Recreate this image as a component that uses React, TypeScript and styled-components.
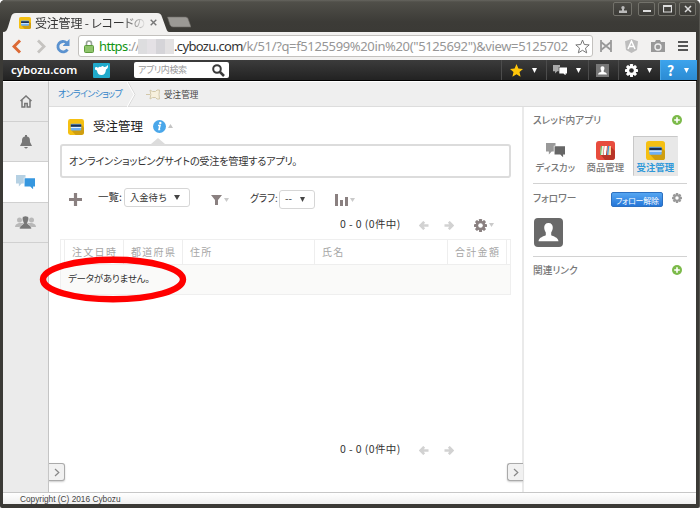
import React from "react";
import styled, { createGlobalStyle } from "styled-components";

const Global = createGlobalStyle`
  * { box-sizing: border-box; }
  body { margin: 0; background: #fff; overflow: hidden; }
  svg { display: block; flex: none; }
`;
const ui = `"Noto Sans", "Noto Sans CJK JP", sans-serif`;
const jp = `"Noto Sans CJK JP", "Noto Sans", sans-serif`;

const Window = styled.div`
  width: 700px; height: 508px; display: flex; flex-direction: column;
  padding: 0 3px 4px 3px; background: #3b3a36; border-radius: 5px 5px 2px 2px;
  border-right: 1px solid #55544f; overflow: hidden; font-family: ${jp};
`;
const Label = styled.span<{ $w: number; $size: number; $color?: string; $ls?: number; $bold?: boolean; $medium?: boolean; $ml?: number; $palt?: boolean; $up?: number }>`
  display: block; flex: none; white-space: nowrap; line-height: 16px;
  width: ${p => p.$w}px; margin-left: ${p => p.$ml ?? 0}px; margin-bottom: ${p => p.$up ?? 0}px;
  font-size: ${p => p.$size}px; color: ${p => p.$color ?? "#333"};
  letter-spacing: ${p => p.$ls ?? 0}px; font-weight: ${p => (p.$bold ? 700 : p.$medium ? 500 : 400)};
  font-feature-settings: ${p => (p.$palt ? '"palt"' : "normal")};
`;

/* Browser chrome */
const TitleBar = styled.div`
  height: 32px; margin: 0 -3px; padding-left: 3px; display: flex; align-items: flex-end; flex: none;
  background: linear-gradient(#66655f 0, #504f49 2px, #3c3b37 22px, #3b3a36);
`;
const Tab = styled.div`
  width: 166px; height: 19px; display: grid; flex: none;
  > * { grid-area: 1 / 1; }
`;
const TabContent = styled.div`
  display: flex; align-items: center; padding-left: 16px; height: 19px;
`;
const TabTitle = styled.div`
  margin-left: 4px; width: 115px; overflow: hidden; flex: none;
  mask-image: linear-gradient(90deg, #000 86px, transparent 112px);
`;
const Controls = styled.div`
  display: flex; margin-left: auto; margin-right: 3px; align-self: flex-start; padding-top: 2px; gap: 3px;
`;
const Control = styled.div<{ $w: number; $gap?: number }>`
  width: ${p => p.$w}px; height: 14px; margin-right: ${p => p.$gap ?? 0}px; border: 1px solid #73726b; border-radius: 2px;
  background: linear-gradient(#4a4944, #3c3b37); display: grid; place-items: center;
`;
const Toolbar = styled.div`
  height: 28px; flex: none; display: flex; align-items: center; background: #f2f1f0;
`;
const UrlBox = styled.div`
  width: 515px; height: 22px; margin-left: 8px; border: 1px solid #c3c1be; border-radius: 3px; background: #fff; flex: none;
  display: flex; align-items: center; padding-left: 5px; font-family: ${ui};
`;
const Masked = styled.div`
  width: 36px; height: 15px; flex: none; display: grid; grid-template-columns: repeat(4, 1fr);
  i:nth-child(1) { background: #dddddf; } i:nth-child(2) { background: #e4e1e5; }
  i:nth-child(3) { background: #d5d4d8; } i:nth-child(4) { background: #e3e1e2; }
`;
const UrlStar = styled.div`width: 17px; height: 18px; background: #fff; display: grid; place-items: center; margin-left: -19px; z-index: 1; flex: none;`;
const ExtIcons = styled.div`display: flex; align-items: center; gap: 13px; margin-left: 9px;`;

/* Service header */
const Header = styled.div`
  height: 21px; flex: none; display: flex; align-items: center; border-bottom: 1px solid #000; margin-right: -1px;
  background: linear-gradient(#3c3c3c, #222);
`;
const Logo = styled.div`
  width: 82px; padding-left: 8px; font: 600 11.5px/18px ${ui}; letter-spacing: 0; color: #fff; white-space: nowrap;
`;
const Search = styled.div`
  width: 95px; height: 16px; margin-left: 24px; background: #fff; border-radius: 2px; display: flex; align-items: center; padding-left: 4px;
`;
const HeaderItem = styled.div<{ $w: number; $help?: boolean }>`
  width: ${p => p.$w}px; height: 20px; display: flex; align-items: center; justify-content: center; gap: 9px; padding-right: 2px;
  border-left: 1px solid ${p => (p.$help ? "#49a8e8" : "#4c4c4c")};
  background: ${p => (p.$help ? "linear-gradient(#3da4ed, #2b8bd3)" : "none")};
`;
const HeaderNav = styled.div`display: flex; margin-left: auto;`;

/* Page body */
const Body = styled.div`height: 411px; flex: none; display: flex; background: #fff;`;
const Side = styled.div`width: 46px; flex: none; background: #ebebeb; border-right: 1px solid #c4c4c4; border-top: 1px solid #fff;`;
const SideItem = styled.div<{ $on?: boolean }>`
  height: 40.2px; display: grid; place-items: center; border-bottom: 1px solid #d0d0d0;
  background: ${p => (p.$on ? "#fff" : "transparent")};
`;
const Page = styled.div`flex: 1; display: flex; flex-direction: column; min-width: 0;`;
const Crumbs = styled.div`
  height: 26px; flex: none; display: flex; align-items: center; background: #efefef; border-bottom: 1px solid #ddd; border-top: 1px solid #fff; padding-left: 9px;
`;
const Columns = styled.div`flex: 1; display: flex; min-height: 0;`;
const Main = styled.div`width: 475px; flex: none; display: flex; flex-direction: column; border-right: 2px solid #eaeaea;`;
const TitleRow = styled.div`height: 31px; flex: none; display: flex; align-items: center; padding: 8px 0 0 19px;`;
const Pointer = styled.div`height: 6px; flex: none; padding-left: 102px;`;
const Description = styled.div`
  width: 451px; height: 34px; flex: none; margin-left: 11px; border: 2px solid #dcdcdc; border-radius: 3px; display: flex; align-items: center; padding-left: 7px;
`;
const Tools = styled.div`height: 33px; margin-top: 5px; flex: none; display: flex; align-items: center; padding-left: 20px;`;
const Shift = styled.div<{ $ml?: number; $mt?: number }>`margin-left: ${p => p.$ml ?? 0}px; margin-top: ${p => p.$mt ?? 0}px; flex: none; display: flex; align-items: center; gap: 2px;`;
const Select = styled.div<{ $w: number; $mt: number }>`
  width: ${p => p.$w}px; height: 19px; margin-top: ${p => p.$mt}px; flex: none; border: 1px solid #d6d6d6; border-radius: 3px;
  display: flex; align-items: center; justify-content: space-between; padding: 0 9px 0 5px;
`;
const PagerRow = styled.div<{ $h: number }>`height: ${p => p.$h}px; flex: none; display: flex; align-items: center; padding-left: 291px;`;
const Table = styled.div`width: 451px; margin: 5px 0 144px 11px; flex: none; border: 1px solid #efefef;`;
const HeadRow = styled.div`height: 25px; display: grid; grid-template-columns: 4px 59px 59px 132px 133px 59px 1fr; border-bottom: 1px solid #eee;`;
const HeadCell = styled.div`
  border-right: 1px solid #eee; padding-left: 7px; display: flex; align-items: center;
  &:first-child { padding: 0; } &:last-child { border: 0; padding: 0; }
`;
const EmptyRow = styled.div`height: 29px; background: #fafaf9; display: flex; align-items: center; padding: 0 0 3px 7px;`;
const Mark = styled.svg`position: absolute; left: 39px; top: 255px; pointer-events: none;`;
const Toggles = styled.div`height: 19px; margin-top: 2px; display: flex; justify-content: space-between; margin-right: -1px;`;
const Toggle = styled.div<{ $right?: boolean }>`
  width: 16px; height: 18px; border: 1px solid #aaa; background: #f1f1f1; display: grid; place-items: center;
  border-radius: ${p => (p.$right ? "3px 0 0 3px" : "0 3px 3px 0")};
  ${p => (p.$right ? "border-right: 0;" : "border-left: 0;")}
  box-shadow: 0 1px 2px #ccc;
`;
const Aside = styled.div`flex: 1; padding: 0 9px 0 9px;`;
const AsideHead = styled.div<{ $h: number; $line?: boolean }>`
  height: ${p => p.$h}px; display: flex; align-items: center; border-top: ${p => (p.$line ? "1px solid #d2d2d2" : "0")};
`;
const Apps = styled.div`height: 51px; display: flex; padding-top: 4px; gap: 5px;`;
const AppTile = styled.div<{ $on?: boolean }>`
  width: 45px; height: 40px; display: flex; flex-direction: column; align-items: center; padding-top: 4px;
  background: ${p => (p.$on ? "#e8e8e8" : "none")}; border: 1px solid; border-color: ${p => (p.$on ? "#c8c8c8 #e8e8e8 #e8e8e8 #c8c8c8" : "transparent")};
`;
const TileIcon = styled.div`height: 18px; display: flex; align-items: center; flex: none;`;
const FollowBtn = styled.div`
  width: 52px; height: 15px; border-radius: 2px; border: 1px solid #2c70c0; background: linear-gradient(#55a6f2, #2576d8); display: grid; place-items: center; margin-left: 35px; margin-top: 4px;
`;
const Avatar = styled.div`height: 45px; padding: 7px 0 0 1px;`;
const Footer = styled.div`
  height: 12px; flex: none; border-top: 1px solid #c7c7c7; background: linear-gradient(#fff, #efefef); padding-left: 17px;
  font: 8.3px/13px "Liberation Sans", sans-serif; color: #444;
`;

const Tri = ({ c = "#fff", w = 6, h = 5, up = false }: { c?: string; w?: number; h?: number; up?: boolean }) => (
  <svg width={w} height={h} viewBox="0 0 6 5" preserveAspectRatio="none"><path d={up ? "M0 5h6L3 0z" : "M0 0h6L3 5z"} fill={c} /></svg>
);
const Card = ({ s }: { s: number }) => (
  <svg width={s} height={s} viewBox="0 0 20 20">
    <rect width="20" height="20" rx="3" fill="#f5c013" /><path d="M16.500 7L20 10.500V17q0 3-3 3H9.500L4 14z" fill="#cf9e10" />
    <rect x="3.500" y="6" width="13" height="8.500" rx="1" fill="#6fb0f5" /><path d="M3.500 7h13v2.800h-13z" fill="#1c3050" /><path d="M3.500 10h13v1.200h-13z" fill="#e3f1ff" />
  </svg>
);
const Books = () => (
  <svg width="19" height="19" viewBox="0 0 19 19">
    <rect width="19" height="19" rx="3" fill="#e84c3d" /><path d="M15 6l4 4v6q0 3-3 3H9l-4-5z" fill="#b93527" />
    <path d="M5 5h3l-1 9H4z" fill="#e8f3df" /><path d="M5 5h1l-1 9H4z" fill="#5eb55b" /><path d="M8.500 5H11l-1 9H7.500z" fill="#fff" /><path d="M12 5h3v9h-4z" fill="#f8d8a0" /><path d="M12 5h1.300l-1 9H11z" fill="#3e9be2" />
  </svg>
);
const Chat = ({ a, b, w = 20 }: { a: string; b: string; w?: number }) => (
  <svg width={w} height={w * 0.75} viewBox="0 0 20 15">
    <path d="M0 0h10v3H8.200v6H6l-3 3V9H0z" fill={a} /><path d="M9 3.500h11V12h-2v3l-3-3H9z" fill={b} />
  </svg>
);
const Gear = ({ s, c, hole }: { s: number; c: string; hole: string }) => (
  <svg width={s} height={s} viewBox="-8 -8 16 16">
    <g fill={c}>{[0, 45, 90, 135].map(r => <rect key={r} x="-1.9" y="-8" width="3.8" height="16" rx=".6" transform={`rotate(${r})`} />)}<circle r="6" /></g><circle r="2.8" fill={hole} />
  </svg>
);
const Arrow = ({ right }: { right?: boolean }) => (
  <svg width="10" height="9" viewBox="0 0 10 9"><path d="M9.500 4.500H2M5.200.8L1.600 4.500l3.600 3.700" fill="none" stroke="#d2d2d2" strokeWidth="2.600" transform={right ? "matrix(-1 0 0 1 10 0)" : undefined} /></svg>
);
const Person = ({ s, bg, r = 0 }: { s: number; bg: string; r?: number }) => (
  <svg width={s} height={s} viewBox="0 0 29 29"><rect width="29" height="29" rx={r} fill={bg} />
    <path d="M14.500 5c3 0 4.500 2 4.300 5-.2 2.400-1.200 3.400-1.600 4.500v2.700c2 1.200 6.800 1.800 7.300 6H4.500c.5-4.200 5.300-4.800 7.300-6v-2.700c-.4-1.100-1.400-2.100-1.600-4.500C10 7 11.500 5 14.500 5z" fill="#fff" /></svg>
);
const Plus = () => (
  <svg width="10" height="10" viewBox="0 0 10 10"><circle cx="5" cy="5" r="5" fill="#7cba4a" /><path d="M5 2.200v5.600M2.200 5h5.600" stroke="#fff" strokeWidth="1.600" /></svg>
);
const Chevron = () => <svg width="6" height="9" viewBox="0 0 6 9"><path d="M1 1l3.800 3.500L1 8" fill="none" stroke="#888" strokeWidth="1.200" /></svg>;

const Pager = () => (<>
  <Label $w={79} $size={10.5} $palt $ls={0.4} $up={2}>0 - 0 (0件中)</Label><Arrow /><Shift $ml={15}><Arrow right /></Shift>
</>);

export default function App() {
  return (
    <Window>
      <Global />
      <TitleBar>
        <Tab>
          <svg width="166" height="19" viewBox="0 0 166 19"><path d="M0 19c3 0 4-2 5-5l3-10c1-3 2-4 5-4h141c3 0 4 1 5 4l4 11c1 3 2 4 3 4z" fill="#f2f1f0" /></svg>
          <TabContent>
            <Card s={12} />
            <TabTitle><Label $w={115} $size={12} $ls={-0.2} $palt>受注管理 - レコードの</Label></TabTitle>
            <svg width="7" height="7" viewBox="0 0 7 7"><path d="M.7.7l5.600 5.600M6.300.7L.7 6.300" stroke="#777" strokeWidth="1.400" /></svg>
          </TabContent>
        </Tab>
        <Shift $ml={-3}><svg width="25" height="16" viewBox="0 0 25 16"><path d="M1.500 1h18q2 0 2.500 1.500L25 11H7q-2 0-3-2z" fill="#9b9995" stroke="#6b6964" strokeWidth=".6" /></svg></Shift>
        <Controls>
          <Control $w={19} $gap={3}><svg width="8" height="7" viewBox="0 0 8 7"><circle cx="4" cy="1.700" r="1.700" fill="#bbb" /><path d="M3 3h2v1.500h3V7H0V4.500h3z" fill="#bbb" /></svg></Control>
          <Control $w={17}><svg width="8" height="8"><path d="M0 6h8" stroke="#ddd" strokeWidth="2" /></svg></Control>
          <Control $w={18}><svg width="9" height="8"><path d="M.5.5h8v6.500h-8zM0 1.500h9" fill="none" stroke="#ddd" strokeWidth="1.200" /></svg></Control>
          <Control $w={17}><svg width="8" height="8"><path d="M1 1l6 6M7 1L1 7" stroke="#ddd" strokeWidth="1.500" /></svg></Control>
        </Controls>
      </TitleBar>
      <Toolbar>
        <Shift $ml={9}><svg width="10" height="15" viewBox="0 0 10 15"><path d="M8 1.500L2 7.500l6 6" fill="none" stroke="#dc6a35" strokeWidth="3" /></svg></Shift>
        <Shift $ml={15}><svg width="9" height="15" viewBox="0 0 9 15"><path d="M1 1.500l6 6-6 6" fill="none" stroke="#c5c3c0" strokeWidth="2.800" /></svg></Shift>
        <Shift $ml={10}><svg width="14" height="15" viewBox="0 0 14 15"><path d="M11.500 10.500A5.200 5.200 0 1 1 10.500 3.700" fill="none" stroke="#5b92cf" strokeWidth="2.800" /><path d="M7 7V6.500L13.500 0v7z" fill="#5b92cf" /></svg></Shift>
        <UrlBox>
          <svg width="10" height="13" viewBox="0 0 10 13"><path d="M2.500 6V3.500a2.500 2.500 0 0 1 5 0V6" fill="none" stroke="#9aa39a" strokeWidth="1.600" /><rect x=".5" y="5.500" width="9" height="7" rx="1" fill="#8fc46b" stroke="#5c9a3c" /></svg>
          <Label $w={29} $ml={5} $size={13} $ls={-0.6} $color="#129412">https</Label>
          <Label $w={10} $size={13} $ls={-0.5} $color="#999">://</Label>
          <Masked><i /><i /><i /><i /></Masked>
          <Label $w={68} $size={13} $ls={-0.65} $color="#333">.cybozu.com</Label>
          <Label $w={331} $size={13} $ls={-0.36} $color="#969696">/k/51/?q=f5125599%20in%20("5125692")&amp;view=5125702</Label>
        </UrlBox>
        <UrlStar><svg width="15" height="15" viewBox="0 0 15 15"><path d="M7.500 1l1.800 4.500 4.900.4-3.700 3.200 1.200 4.800-4.200-2.600-4.200 2.600 1.200-4.800L.8 5.900l4.900-.4z" fill="#fff" stroke="#777" /></svg></UrlStar>
        <ExtIcons>
          <svg width="12" height="12" viewBox="0 0 12 12"><path d="M1 0v12M11 0v12M1 2l10 8M11 2L1 10" stroke="#999" strokeWidth="1.800" /></svg>
          <svg width="13" height="14" viewBox="0 0 13 14"><path d="M6.500 0L13 2.300l-1 8.700-5.500 3L1 11 0 2.300z" fill="#bdbdbd" /><path d="M3 10l3.500-8L10 10M4.500 7.500h4" fill="none" stroke="#fff" strokeWidth="1.500" /></svg>
          <svg width="14" height="12" viewBox="0 0 14 12"><path d="M4 2l1-2h4l1 2h4v10H0V2z" fill="#999" /><circle cx="7" cy="7" r="3" fill="none" stroke="#eee" strokeWidth="1.400" /></svg>
          <svg width="10" height="10" viewBox="0 0 10 10"><path d="M0 1h10M0 5h10M0 9h10" stroke="#555" strokeWidth="2" /></svg>
        </ExtIcons>
      </Toolbar>
      <Header>
        <Logo>cybozu.com</Logo>
        <Shift $ml={8}><svg width="17" height="15" viewBox="0 0 17 15"><rect width="17" height="15" rx="1" fill="#20aacb" /><path d="M2 4.500q2-1 3 .5Q6 3 8 4q1.500-2 3 0 2 .5 4-2 .5 3-2 4.500Q12.500 12 8.500 12q-4 0-4.500-4.500L2 6.500z" fill="#fff" /></svg></Shift>
        <Search>
          <Label $w={74} $size={9} $ls={-0.4} $palt $color="#999">アプリ内検索</Label>
          <svg width="13" height="13" viewBox="0 0 13 13"><circle cx="5" cy="5" r="3.800" fill="none" stroke="#3a3a3a" strokeWidth="2" /><path d="M8 8l4 4" stroke="#3a3a3a" strokeWidth="2.500" /></svg>
        </Search>
        <HeaderNav>
          <HeaderItem $w={45}><svg width="13" height="13" viewBox="0 0 13 13"><path d="M6.500 0l1.900 4.500 4.600.4-3.500 3.200 1.100 4.700-4.100-2.500-4.100 2.500 1.100-4.700L0 4.900l4.600-.4z" fill="#ffc60a" /></svg><Tri w={5} /></HeaderItem>
          <HeaderItem $w={42}><Chat a="#aaa" b="#fff" w={14} /><Tri w={5} /></HeaderItem>
          <HeaderItem $w={30}><Person s={13} bg="#777" /></HeaderItem>
          <HeaderItem $w={42}><Gear s={13} c="#fff" hole="#2c2c2c" /><Tri w={5} /></HeaderItem>
          <HeaderItem $w={37} $help><Label $w={8} $size={14} $bold $color="#fff">?</Label><Tri w={5} /></HeaderItem>
        </HeaderNav>
      </Header>
      <Body>
        <Side>
          <SideItem><svg width="12" height="13" viewBox="0 0 12 13"><path d="M.5 6L6 1l5.500 5M2 5v7h2.800V8.500h2.400V12H10V5" fill="none" stroke="#777" strokeWidth="1.500" /></svg></SideItem>
          <SideItem><svg width="12" height="14" viewBox="0 0 12 14"><path d="M5 0h2v1.500c3 .5 3 3 3 5.500l2 4H0l2-4c0-2.500 0-5 3-5.500zM4 12h4q-2 3-4 0z" fill="#777" /></svg></SideItem>
          <SideItem $on><Chat a="#b6d1e3" b="#3697df" w={19} /></SideItem>
          <SideItem><svg width="21" height="13" viewBox="0 0 21 13"><g fill="#b8b8b8"><circle cx="4.500" cy="4" r="2.500" /><circle cx="16.500" cy="4" r="2.500" /><path d="M0 11q0-3 4-4h13q4 1 4 4z" /></g><path d="M10.500 0c5 0 3 5 1.800 7 0 2 4 1.500 4.200 6h-12c.2-4.500 4.200-4 4.200-6C7.500 5 5.500 0 10.500 0z" fill="#777" stroke="#ebebeb" strokeWidth=".6" /></svg></SideItem>
        </Side>
        <Page>
          <Crumbs>
            <Label $w={69} $size={9} $ls={-0.7} $palt $color="#3285c9">オンラインショップ</Label>
            <svg width="10" height="25" viewBox="0 0 10 25"><path d="M1 0l7 12.500L1 25" fill="none" stroke="#d8d8d8" /><path d="M0 0l7 12.500L0 25" fill="none" stroke="#fff" /></svg>
            <Shift $ml={9}><svg width="14" height="11" viewBox="0 0 14 11"><path d="M0 5.500h4M4 1l2.500 1.500h3L11 1h2.500l-.5 4.500.5 4.500H11L9.500 8.500h-3L4 10l.8-4.500z" fill="#f7f0dd" stroke="#d3c8aa" /></svg></Shift>
            <Label $w={50} $ml={4} $size={8.6} $color="#444">受注管理</Label>
          </Crumbs>
          <Columns>
            <Main>
              <TitleRow>
                <Card s={16} />
                <Label $w={50} $ml={9} $size={12.5} $color="#222" $up={1}>受注管理</Label>
                <Shift $ml={10}><svg width="13" height="13" viewBox="0 0 13 13"><circle cx="6.500" cy="6.500" r="6.500" fill="#4aa7ea" /><circle cx="7.300" cy="3" r="1.200" fill="#fff" /><path d="M5 5.500h2L6 9.500h1.200" fill="none" stroke="#fff" strokeWidth="1.500" /></svg></Shift>
                <Shift $ml={2} $mt={-2}><Tri up c="#c4c4c4" w={5} h={4} /></Shift>
              </TitleRow>
              <Pointer><Tri up c="#dcdcdc" w={14} h={6} /></Pointer>
              <Description><Label $w={240} $size={10.2} $palt $ls={-0.26} $up={1}>オンラインショッピングサイトの受注を管理するアプリ。</Label></Description>
              <Tools>
                <svg width="13" height="13" viewBox="0 0 13 13"><path d="M6.500 0v13M0 6.500h13" stroke="#8a8080" strokeWidth="3.200" /></svg>
                <Label $w={26} $ml={16} $size={10.5} $up={6}>一覧:</Label>
                <Select $w={66} $mt={-5}><Label $w={37} $size={9.3}>入金待ち</Label><Tri c="#444" w={6} h={5} /></Select>
                <Shift $ml={21} $mt={1}><svg width="11" height="10" viewBox="0 0 11 10"><path d="M0 0h11L7 5v5H4V5z" fill="#8a8080" /></svg><Tri c="#cacaca" w={5} h={4} /></Shift>
                <Label $w={29} $ml={21} $size={9.7} $palt $ls={-0.1} $up={3}>グラフ:</Label>
                <Select $w={36} $mt={-1}><Label $w={10} $size={10} $up={2}>--</Label><Tri c="#444" w={5} h={5} /></Select>
                <Shift $ml={20}><svg width="13" height="12" viewBox="0 0 13 12"><path d="M0 0h3v12H0zM5 6h3v6H5zM10 3h3v9h-3z" fill="#8a8080" /></svg><Tri c="#cacaca" w={5} h={4} /></Shift>
              </Tools>
              <PagerRow $h={18}><Pager /><Shift $ml={20}><Gear s={13} c="#8a8080" hole="#fff" /><Tri c="#cacaca" w={5} h={4} /></Shift></PagerRow>
              <Table>
                <HeadRow>
                  <HeadCell />
                  {["注文日時", "都道府県", "住所", "氏名", "合計金額"].map(t => <HeadCell key={t}><Label $w={48} $size={10} $ls={1.3} $color="#a6a6a6">{t}</Label></HeadCell>)}
                  <HeadCell />
                </HeadRow>
                <EmptyRow><Label $w={90} $size={9.5} $palt $ls={-0.25}>データがありません。</Label></EmptyRow>
              </Table>
              <PagerRow $h={22}><Pager /></PagerRow>
              <Toggles><Toggle><Chevron /></Toggle><Toggle $right><Chevron /></Toggle></Toggles>
            </Main>
            <Aside>
              <AsideHead $h={25}><Label $w={139} $size={9.7} $palt $medium $color="#777">スレッド内アプリ</Label><Plus /></AsideHead>
              <Apps>
                <AppTile><TileIcon><Chat a="#999" b="#666" w={19} /></TileIcon><Label $w={40} $size={9.3} $palt $medium $color="#777">ディスカッ</Label></AppTile>
                <AppTile><TileIcon><Books /></TileIcon><Label $w={38} $size={9.4} $medium $color="#777">商品管理</Label></AppTile>
                <AppTile $on><TileIcon><Card s={19} /></TileIcon><Label $w={38} $size={9.4} $bold $color="#2f98d9">受注管理</Label></AppTile>
              </Apps>
              <AsideHead $h={28} $line>
                <Label $w={43} $size={9.7} $palt $medium $color="#777">フォロワー</Label>
                <FollowBtn><Label $w={43} $size={8} $palt $ls={-0.2} $color="#fff">フォロー解除</Label></FollowBtn>
                <Shift $ml={9}><Gear s={10} c="#999" hole="#fff" /></Shift>
              </AsideHead>
              <Avatar><Person s={29} bg="#696969" r={4} /></Avatar>
              <AsideHead $h={26} $line><Label $w={139} $size={9.7} $palt $medium $color="#777">関連リンク</Label><Plus /></AsideHead>
            </Aside>
          </Columns>
        </Page>
      </Body>
      <Footer>Copyright (C) 2016 Cybozu</Footer>
      <Mark width="148" height="49" viewBox="0 0 148 49"><ellipse cx="74" cy="24.500" rx="70" ry="19.800" fill="none" stroke="#f00" strokeWidth="6.400" /></Mark>
    </Window>
  );
}
